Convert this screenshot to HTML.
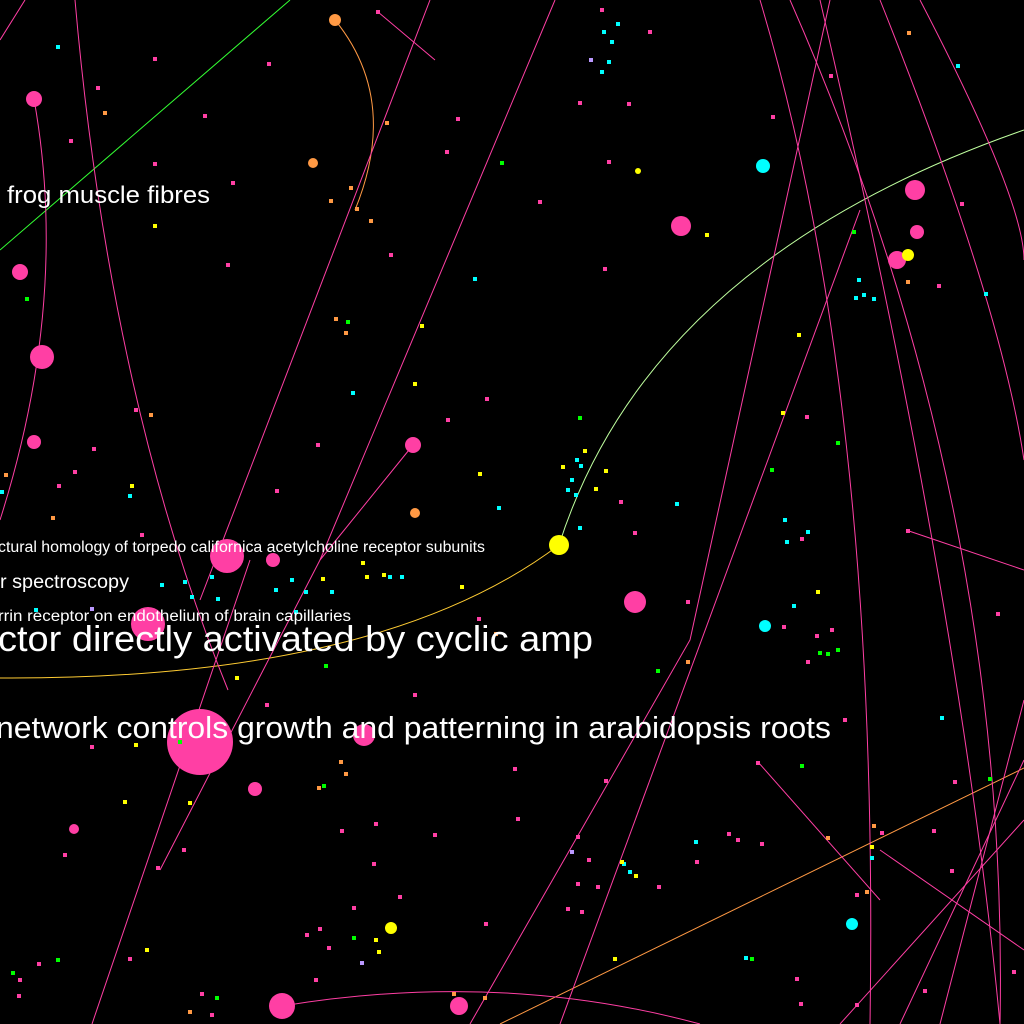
<!DOCTYPE html>
<html><head><meta charset="utf-8"><style>
html,body{margin:0;padding:0;background:#000;width:1024px;height:1024px;overflow:hidden}
svg{display:block}
text{font-family:"Liberation Sans",sans-serif;fill:#fff}
</style></head><body>
<svg width="1024" height="1024" viewBox="0 0 1024 1024">
<rect width="1024" height="1024" fill="#000"/>
<g fill="none" stroke-width="1">
<path d="M0 250 L290 0" stroke="#3f3"/>
<path d="M559 545 Q650 260 1024 130" stroke="#bfff9f"/>
<path d="M0 678 Q380 680 559 545" stroke="#fc3"/>
<path d="M335 20 Q400 100 355 210" stroke="#f94"/>
<path d="M500 1024 L1024 768" stroke="#f94"/>
<g stroke="#ff3fa4">
<path d="M34 99 Q70 300 0 520"/>
<path d="M75 0 Q110 400 228 690"/>
<path d="M430 0 L200 600"/>
<path d="M555 0 L320 560 L160 870"/>
<path d="M413 445 L320 560"/>
<path d="M0 40 L25 0"/>
<path d="M92 1024 L250 560"/>
<path d="M378 12 L435 60"/>
<path d="M282 1006 Q500 970 700 1024"/>
<path d="M470 1024 L690 640 L830 0"/>
<path d="M560 1024 L860 210"/>
<path d="M760 0 Q880 400 870 1024"/>
<path d="M790 0 Q1010 500 1000 1024"/>
<path d="M880 0 Q1000 300 1024 460"/>
<path d="M920 0 Q1024 200 1024 260"/>
<path d="M900 1024 L1024 760"/>
<path d="M840 1024 L1024 820"/>
<path d="M758 762 L880 900"/>
<path d="M1024 950 L880 850"/>
<path d="M906 530 L1024 570"/>
<path d="M940 1024 L1024 700"/>
<path d="M1000 1024 Q960 600 820 0"/>
</g>
</g>
<g fill="#ff3fa4">
<circle cx="200" cy="742" r="33"/><circle cx="148" cy="624" r="17"/><circle cx="227" cy="556" r="17"/>
<circle cx="282" cy="1006" r="13"/><circle cx="42" cy="357" r="12"/><circle cx="681" cy="226" r="10"/>
<circle cx="635" cy="602" r="11"/><circle cx="915" cy="190" r="10"/><circle cx="917" cy="232" r="7"/>
<circle cx="897" cy="260" r="9"/><circle cx="34" cy="99" r="8"/><circle cx="20" cy="272" r="8"/>
<circle cx="34" cy="442" r="7"/><circle cx="413" cy="445" r="8"/><circle cx="364" cy="735" r="11"/>
<circle cx="459" cy="1006" r="9"/><circle cx="255" cy="789" r="7"/><circle cx="273" cy="560" r="7"/>
<circle cx="74" cy="829" r="5"/>
</g>
<g fill="#ff0"><circle cx="559" cy="545" r="10"/><circle cx="391" cy="928" r="6"/><circle cx="908" cy="255" r="6"/><circle cx="638" cy="171" r="3"/></g>
<g fill="#0ff"><circle cx="763" cy="166" r="7"/><circle cx="765" cy="626" r="6"/><circle cx="852" cy="924" r="6"/></g>
<g fill="#f94"><circle cx="335" cy="20" r="6"/><circle cx="313" cy="163" r="5"/><circle cx="415" cy="513" r="5"/></g>
<g fill="#ff3fa4">
<rect x="153" y="57" width="4" height="4"/><rect x="267" y="62" width="4" height="4"/><rect x="96" y="86" width="4" height="4"/>
<rect x="203" y="114" width="4" height="4"/><rect x="69" y="139" width="4" height="4"/><rect x="153" y="162" width="4" height="4"/>
<rect x="231" y="181" width="4" height="4"/><rect x="445" y="150" width="4" height="4"/><rect x="456" y="117" width="4" height="4"/>
<rect x="389" y="253" width="4" height="4"/><rect x="226" y="263" width="4" height="4"/><rect x="538" y="200" width="4" height="4"/>
<rect x="603" y="267" width="4" height="4"/><rect x="607" y="160" width="4" height="4"/><rect x="648" y="30" width="4" height="4"/>
<rect x="829" y="74" width="4" height="4"/><rect x="771" y="115" width="4" height="4"/><rect x="960" y="202" width="4" height="4"/>
<rect x="937" y="284" width="4" height="4"/><rect x="485" y="397" width="4" height="4"/><rect x="446" y="418" width="4" height="4"/>
<rect x="316" y="443" width="4" height="4"/><rect x="134" y="408" width="4" height="4"/><rect x="73" y="470" width="4" height="4"/>
<rect x="57" y="484" width="4" height="4"/><rect x="92" y="447" width="4" height="4"/><rect x="275" y="489" width="4" height="4"/>
<rect x="140" y="533" width="4" height="4"/><rect x="619" y="500" width="4" height="4"/><rect x="633" y="531" width="4" height="4"/>
<rect x="686" y="600" width="4" height="4"/><rect x="805" y="415" width="4" height="4"/><rect x="906" y="529" width="4" height="4"/>
<rect x="800" y="537" width="4" height="4"/><rect x="782" y="625" width="4" height="4"/><rect x="815" y="634" width="4" height="4"/>
<rect x="830" y="628" width="4" height="4"/><rect x="806" y="660" width="4" height="4"/><rect x="843" y="718" width="4" height="4"/>
<rect x="756" y="761" width="4" height="4"/><rect x="413" y="693" width="4" height="4"/><rect x="477" y="617" width="4" height="4"/>
<rect x="265" y="703" width="4" height="4"/><rect x="90" y="745" width="4" height="4"/><rect x="513" y="767" width="4" height="4"/>
<rect x="516" y="817" width="4" height="4"/><rect x="433" y="833" width="4" height="4"/><rect x="374" y="822" width="4" height="4"/>
<rect x="340" y="829" width="4" height="4"/><rect x="372" y="862" width="4" height="4"/><rect x="182" y="848" width="4" height="4"/>
<rect x="63" y="853" width="4" height="4"/><rect x="156" y="866" width="4" height="4"/><rect x="576" y="835" width="4" height="4"/>
<rect x="587" y="858" width="4" height="4"/><rect x="576" y="882" width="4" height="4"/><rect x="596" y="885" width="4" height="4"/>
<rect x="566" y="907" width="4" height="4"/><rect x="580" y="910" width="4" height="4"/><rect x="657" y="885" width="4" height="4"/>
<rect x="604" y="779" width="4" height="4"/><rect x="695" y="860" width="4" height="4"/><rect x="727" y="832" width="4" height="4"/>
<rect x="736" y="838" width="4" height="4"/><rect x="760" y="842" width="4" height="4"/><rect x="880" y="831" width="4" height="4"/>
<rect x="932" y="829" width="4" height="4"/><rect x="950" y="869" width="4" height="4"/><rect x="953" y="780" width="4" height="4"/>
<rect x="855" y="893" width="4" height="4"/><rect x="795" y="977" width="4" height="4"/><rect x="799" y="1002" width="4" height="4"/>
<rect x="855" y="1003" width="4" height="4"/><rect x="923" y="989" width="4" height="4"/><rect x="484" y="922" width="4" height="4"/>
<rect x="398" y="895" width="4" height="4"/><rect x="352" y="906" width="4" height="4"/><rect x="305" y="933" width="4" height="4"/>
<rect x="318" y="927" width="4" height="4"/><rect x="327" y="946" width="4" height="4"/><rect x="128" y="957" width="4" height="4"/>
<rect x="37" y="962" width="4" height="4"/><rect x="18" y="978" width="4" height="4"/><rect x="17" y="994" width="4" height="4"/>
<rect x="200" y="992" width="4" height="4"/><rect x="210" y="1013" width="4" height="4"/><rect x="314" y="978" width="4" height="4"/>
<rect x="996" y="612" width="4" height="4"/><rect x="1012" y="970" width="4" height="4"/><rect x="578" y="101" width="4" height="4"/>
<rect x="627" y="102" width="4" height="4"/><rect x="600" y="8" width="4" height="4"/><rect x="376" y="10" width="4" height="4"/>
</g>
<g fill="#0ff">
<rect x="602" y="30" width="4" height="4"/><rect x="616" y="22" width="4" height="4"/><rect x="610" y="40" width="4" height="4"/>
<rect x="607" y="60" width="4" height="4"/><rect x="600" y="70" width="4" height="4"/><rect x="956" y="64" width="4" height="4"/>
<rect x="56" y="45" width="4" height="4"/><rect x="473" y="277" width="4" height="4"/><rect x="351" y="391" width="4" height="4"/>
<rect x="857" y="278" width="4" height="4"/><rect x="862" y="293" width="4" height="4"/><rect x="872" y="297" width="4" height="4"/>
<rect x="854" y="296" width="4" height="4"/><rect x="984" y="292" width="4" height="4"/><rect x="575" y="458" width="4" height="4"/>
<rect x="579" y="464" width="4" height="4"/><rect x="570" y="478" width="4" height="4"/><rect x="566" y="488" width="4" height="4"/>
<rect x="574" y="493" width="4" height="4"/><rect x="497" y="506" width="4" height="4"/><rect x="675" y="502" width="4" height="4"/>
<rect x="578" y="526" width="4" height="4"/><rect x="783" y="518" width="4" height="4"/><rect x="785" y="540" width="4" height="4"/>
<rect x="806" y="530" width="4" height="4"/><rect x="128" y="494" width="4" height="4"/><rect x="183" y="580" width="4" height="4"/>
<rect x="190" y="595" width="4" height="4"/><rect x="210" y="575" width="4" height="4"/><rect x="274" y="588" width="4" height="4"/>
<rect x="290" y="578" width="4" height="4"/><rect x="304" y="590" width="4" height="4"/><rect x="330" y="590" width="4" height="4"/>
<rect x="294" y="610" width="4" height="4"/><rect x="160" y="583" width="4" height="4"/><rect x="34" y="608" width="4" height="4"/>
<rect x="216" y="597" width="4" height="4"/><rect x="792" y="604" width="4" height="4"/><rect x="940" y="716" width="4" height="4"/>
<rect x="694" y="840" width="4" height="4"/><rect x="628" y="870" width="4" height="4"/><rect x="622" y="862" width="4" height="4"/>
<rect x="870" y="856" width="4" height="4"/><rect x="744" y="956" width="4" height="4"/><rect x="0" y="490" width="4" height="4"/>
<rect x="400" y="575" width="4" height="4"/><rect x="388" y="575" width="4" height="4"/>
</g>
<g fill="#ff0">
<rect x="153" y="224" width="4" height="4"/><rect x="420" y="324" width="4" height="4"/><rect x="413" y="382" width="4" height="4"/>
<rect x="705" y="233" width="4" height="4"/><rect x="797" y="333" width="4" height="4"/><rect x="781" y="411" width="4" height="4"/>
<rect x="478" y="472" width="4" height="4"/><rect x="561" y="465" width="4" height="4"/><rect x="583" y="449" width="4" height="4"/>
<rect x="604" y="469" width="4" height="4"/><rect x="594" y="487" width="4" height="4"/><rect x="361" y="561" width="4" height="4"/>
<rect x="382" y="573" width="4" height="4"/><rect x="365" y="575" width="4" height="4"/><rect x="321" y="577" width="4" height="4"/>
<rect x="460" y="585" width="4" height="4"/><rect x="816" y="590" width="4" height="4"/><rect x="235" y="676" width="4" height="4"/>
<rect x="134" y="743" width="4" height="4"/><rect x="123" y="800" width="4" height="4"/><rect x="188" y="801" width="4" height="4"/>
<rect x="870" y="845" width="4" height="4"/><rect x="613" y="957" width="4" height="4"/><rect x="374" y="938" width="4" height="4"/>
<rect x="377" y="950" width="4" height="4"/><rect x="145" y="948" width="4" height="4"/><rect x="620" y="860" width="4" height="4"/>
<rect x="634" y="874" width="4" height="4"/><rect x="130" y="484" width="4" height="4"/>
</g>
<g fill="#0f0">
<rect x="500" y="161" width="4" height="4"/><rect x="852" y="230" width="4" height="4"/><rect x="25" y="297" width="4" height="4"/>
<rect x="346" y="320" width="4" height="4"/><rect x="578" y="416" width="4" height="4"/><rect x="836" y="441" width="4" height="4"/>
<rect x="770" y="468" width="4" height="4"/><rect x="324" y="664" width="4" height="4"/><rect x="656" y="669" width="4" height="4"/>
<rect x="818" y="651" width="4" height="4"/><rect x="826" y="652" width="4" height="4"/><rect x="836" y="648" width="4" height="4"/>
<rect x="800" y="764" width="4" height="4"/><rect x="988" y="777" width="4" height="4"/><rect x="178" y="740" width="4" height="4"/>
<rect x="322" y="784" width="4" height="4"/><rect x="352" y="936" width="4" height="4"/><rect x="56" y="958" width="4" height="4"/>
<rect x="11" y="971" width="4" height="4"/><rect x="215" y="996" width="4" height="4"/><rect x="750" y="957" width="4" height="4"/>
</g>
<g fill="#f94">
<rect x="103" y="111" width="4" height="4"/><rect x="385" y="121" width="4" height="4"/><rect x="349" y="186" width="4" height="4"/>
<rect x="329" y="199" width="4" height="4"/><rect x="355" y="207" width="4" height="4"/><rect x="369" y="219" width="4" height="4"/>
<rect x="334" y="317" width="4" height="4"/><rect x="344" y="331" width="4" height="4"/><rect x="149" y="413" width="4" height="4"/>
<rect x="4" y="473" width="4" height="4"/><rect x="51" y="516" width="4" height="4"/><rect x="906" y="280" width="4" height="4"/>
<rect x="907" y="31" width="4" height="4"/><rect x="686" y="660" width="4" height="4"/><rect x="494" y="632" width="4" height="4"/>
<rect x="339" y="760" width="4" height="4"/><rect x="344" y="772" width="4" height="4"/><rect x="317" y="786" width="4" height="4"/>
<rect x="826" y="836" width="4" height="4"/><rect x="872" y="824" width="4" height="4"/><rect x="865" y="890" width="4" height="4"/>
<rect x="452" y="992" width="4" height="4"/><rect x="483" y="996" width="4" height="4"/><rect x="188" y="1010" width="4" height="4"/>
</g>
<g fill="#b9f">
<rect x="589" y="58" width="4" height="4"/><rect x="90" y="607" width="4" height="4"/><rect x="570" y="850" width="4" height="4"/>
<rect x="360" y="961" width="4" height="4"/>
</g>
<text x="7" y="203" font-size="24" textLength="203" lengthAdjust="spacingAndGlyphs">frog muscle fibres</text>
<text x="-2" y="552" font-size="15.5" textLength="487" lengthAdjust="spacingAndGlyphs">ctural homology of torpedo californica acetylcholine receptor subunits</text>
<text x="0" y="588" font-size="19" textLength="129" lengthAdjust="spacingAndGlyphs">r spectroscopy</text>
<text x="-2" y="621" font-size="15.5" textLength="353" lengthAdjust="spacingAndGlyphs">rrin receptor on endothelium of brain capillaries</text>
<text x="-2" y="651" font-size="36" textLength="595" lengthAdjust="spacingAndGlyphs">ctor directly activated by cyclic amp</text>
<text x="-4" y="738" font-size="31" textLength="835" lengthAdjust="spacingAndGlyphs">network controls growth and patterning in arabidopsis roots</text>
</svg>
</body></html>
